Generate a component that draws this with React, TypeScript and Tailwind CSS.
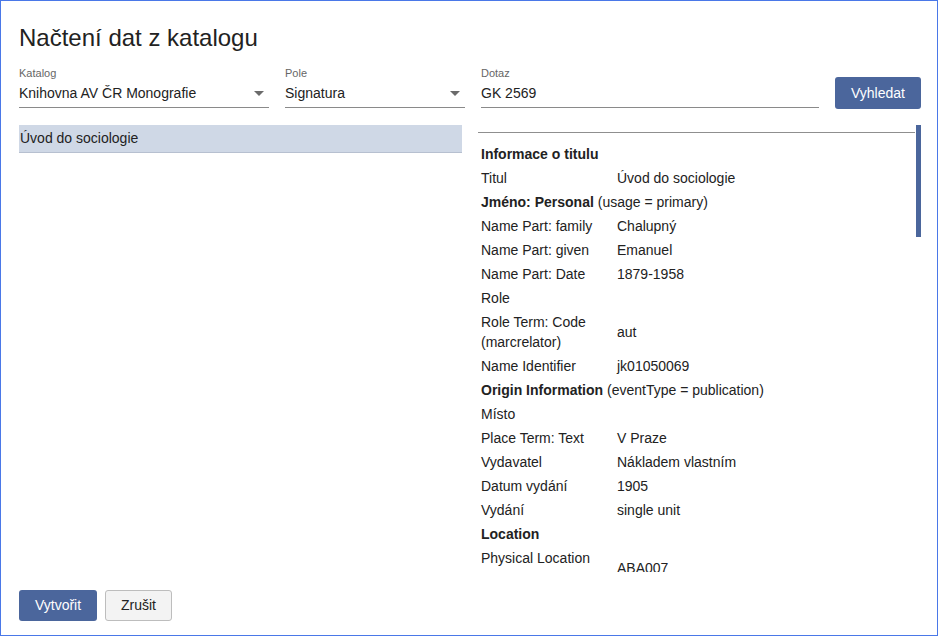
import type { ReactNode } from 'react'

type Row =
  | { kind: 'head'; title: string; note?: string }
  | { kind: 'pair'; label: string; value?: string; tall?: boolean }

const rows: Row[] = [
  { kind: 'head', title: 'Informace o titulu' },
  { kind: 'pair', label: 'Titul', value: 'Úvod do sociologie' },
  { kind: 'head', title: 'Jméno: Personal', note: '(usage = primary)' },
  { kind: 'pair', label: 'Name Part: family', value: 'Chalupný' },
  { kind: 'pair', label: 'Name Part: given', value: 'Emanuel' },
  { kind: 'pair', label: 'Name Part: Date', value: '1879-1958' },
  { kind: 'pair', label: 'Role' },
  { kind: 'pair', label: 'Role Term: Code (marcrelator)', value: 'aut' },
  { kind: 'pair', label: 'Name Identifier', value: 'jk01050069' },
  { kind: 'head', title: 'Origin Information', note: '(eventType = publication)' },
  { kind: 'pair', label: 'Místo' },
  { kind: 'pair', label: 'Place Term: Text', value: 'V Praze' },
  { kind: 'pair', label: 'Vydavatel', value: 'Nákladem vlastním' },
  { kind: 'pair', label: 'Datum vydání', value: '1905' },
  { kind: 'pair', label: 'Vydání', value: 'single unit' },
  { kind: 'head', title: 'Location' },
  { kind: 'pair', label: 'Physical Location', value: 'ABA007', tall: true },
]

function Field({
  label,
  value,
  width,
  select,
}: {
  label: string
  value: string
  width: string
  select?: boolean
}) {
  return (
    <div className={`${width} flex flex-col`}>
      <div className="h-[13px] text-[11px] leading-[13px] text-[#666]">{label}</div>
      <div className="flex h-[28px] items-center border-b border-[#8a8a8a] pb-[1px] text-[14px] leading-5 text-[#222]">
        <span className="flex-1">{value}</span>
        {select && (
          <svg width="10" height="5" viewBox="0 0 10 5" className="mr-[5px]">
            <path d="M0 0h10L5 5z" fill="#6b6b6b" />
          </svg>
        )}
      </div>
    </div>
  )
}

function Button({ children, primary, className }: { children: ReactNode; primary?: boolean; className: string }) {
  return (
    <button
      className={
        primary
          ? `${className} rounded-[3px] bg-[#4b669c] text-[14px] text-white`
          : `${className} rounded-[3px] border border-[#bdbdbd] bg-[#f3f3f3] text-[14px] text-[#222]`
      }
    >
      {children}
    </button>
  )
}

export default function App() {
  return (
    <div
      className="flex h-[636px] w-[938px] flex-col border border-[#4a78e8] bg-white pl-[18px] pr-[16px] text-[#222]"
      style={{ fontFamily: '"Liberation Sans", Arial, sans-serif' }}
    >
      <h1 className="mt-[23px] h-[28px] text-[24px] leading-[28px] text-[#222]">Načtení dat z katalogu</h1>

      <div className="mt-[15px] flex items-start gap-4">
        <Field label="Katalog" value="Knihovna AV ČR Monografie" width="w-[250px]" select />
        <Field label="Pole" value="Signatura" width="w-[180px]" select />
        <Field label="Dotaz" value="GK 2569" width="w-[338px]" />
        <Button primary className="mt-[10px] h-[32px] w-[86px]">
          Vyhledat
        </Button>
      </div>

      <div className="mt-[16px] grid h-[447px] grid-cols-2 gap-4 overflow-hidden">
        <div>
          <div className="flex h-[28px] items-center border-b border-[#b7c0d0] bg-[#cfd8e6] pb-[1px] pl-[1px] text-[14px] leading-5">
            Úvod do sociologie
          </div>
        </div>

        <div className="flex overflow-hidden">
          <div className="flex-1 overflow-hidden pt-[7px]">
            <div className="border-t border-[#8f8f8f] pl-[3px] pt-[9px] text-[14px] leading-5 text-[#222]">
              {rows.map((r, i) =>
                r.kind === 'head' ? (
                  <div key={i} className="py-[2px]">
                    <span className="font-bold">{r.title}</span>
                    {r.note && <span> {r.note}</span>}
                  </div>
                ) : (
                  <div key={i} className="flex items-center py-[2px]">
                    <div className={r.tall ? 'h-[40px] w-[136px] shrink-0 pr-[10px]' : 'w-[136px] shrink-0 pr-[10px]'}>
                      {r.label}
                    </div>
                    <div>{r.value}</div>
                  </div>
                ),
              )}
            </div>
          </div>
          <div className="w-[6px] shrink-0">
            <div className="ml-[1px] h-[112px] w-[5px] bg-[#4b669c]" />
          </div>
        </div>
      </div>

      <div className="mt-[18px] flex gap-2">
        <Button primary className="h-[31px] w-[78px]">
          Vytvořit
        </Button>
        <Button className="h-[31px] w-[67px]">Zrušit</Button>
      </div>
    </div>
  )
}
